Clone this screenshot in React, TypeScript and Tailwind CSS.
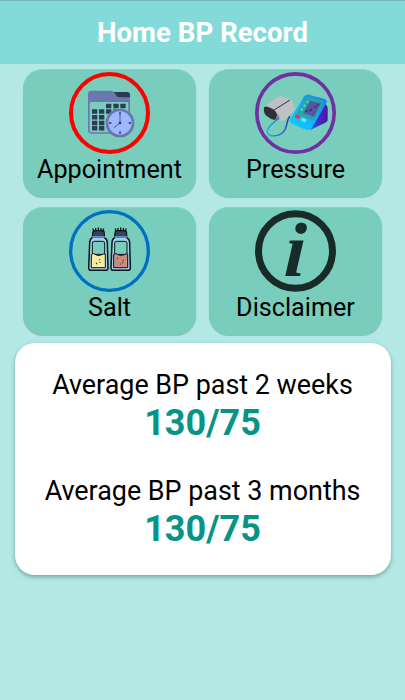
import type { ReactNode } from 'react';

type Tile = {
  label: string;
  icon: ReactNode;
};

type Reading = {
  period: string;
  value: string;
};

const ICON_BOX = '27 18 243 246';

// [x, y] of each day cell on the calendar page
const DAY_CELLS = [
  [138, 113], [160, 113], [181, 113],
  [96, 130], [117, 130], [138, 130], [160, 130],
  [96, 147], [117, 147],
  [96, 164], [117, 164],
  [96, 180], [117, 180],
];

const AppointmentIcon = () => (
  <svg viewBox={ICON_BOX} className="h-[82px] w-[81px]">
    <ellipse cx="148.5" cy="141" rx="115.5" ry="117" fill="none" stroke="#ff0000" strokeWidth="12" />
    {/* folder */}
    <path d="M152 78h50q8 0 8 9v18h-40z" fill="#30384f" />
    <path d="M84 84q0-10 10-10h60q5 0 9 6l4 6q4 8 12 8h31v100q0 9-9 9H94q-10 0-10-10z" fill="#6979ae" />
    <path d="M89 114q0-6 6-6h104q6 0 6 6v79q0 6-6 6H95q-6 0-6-6z" fill="#78cdbc" />
    {DAY_CELLS.map(([x, y]) => (
      <rect key={`${x}-${y}`} x={x} y={y} width="16" height="13.5" rx="1.5" fill="#303955" />
    ))}
    {/* clock */}
    <circle cx="180" cy="171" r="43" fill="#6678ad" />
    <circle cx="180" cy="171" r="35" fill="#9db8ff" />
    <path d="M180 138v8M180 196v8M147 171h7M206 171h7" stroke="#293252" strokeWidth="4" />
    <path d="M180 147v24l-18 14" fill="none" stroke="#43527d" strokeWidth="2.5" />
    <circle cx="180" cy="171" r="4" fill="#293252" />
  </svg>
);

const PressureIcon = () => (
  <svg viewBox={ICON_BOX} className="h-[82px] w-[81px]">
    <defs>
      <linearGradient id="monitor-face" x1="0" y1="1" x2="1" y2="0">
        <stop offset="0" stopColor="#08d5f4" />
        <stop offset="0.5" stopColor="#10b0ff" />
        <stop offset="1" stopColor="#1878f0" />
      </linearGradient>
      <linearGradient id="monitor-side" x1="0" y1="0" x2="1" y2="0">
        <stop offset="0" stopColor="#1688f5" />
        <stop offset="0.6" stopColor="#3c32c8" />
        <stop offset="1" stopColor="#5a0ca8" />
      </linearGradient>
      <linearGradient id="tube" x1="0" y1="0" x2="1" y2="0">
        <stop offset="0" stopColor="#14b9e8" />
        <stop offset="1" stopColor="#2b2fae" />
      </linearGradient>
    </defs>
    <ellipse cx="148.5" cy="141" rx="116" ry="117.5" fill="none" stroke="#7030a0" strokeWidth="11" />
    {/* cuff */}
    <path d="M56 120l38-26q8-5 17-2l24 8q6 10 12 30l-30 32q-8 5-15 2l-44-17q-7-14-2-27z" fill="#bfc0c5" />
    <path d="M132 102l-48 30" stroke="#33343a" strokeWidth="3" />
    <path d="M54 124q7-6 20 2 16 7 19 19 1 15-6 17-12-1-24-11-12-9-9-27z" fill="#303136" />
    <path d="M94 144q7 4 5 17l-11 2z" fill="#888a91" />
    <path d="M99 156C84 170 60 185 64 200C72 216 107 212 118 189C125 174 122 160 132 151" fill="none" stroke="url(#tube)" strokeWidth="4" />
    {/* monitor */}
    <path d="M230 103l13 17q2 2 2 8v35q-1 4-7 7l-44 21-18-8z" fill="url(#monitor-side)" />
    <path d="M175 90q5-6 14-4l47 13q9 3 5 12l-43 74q-5 9-16 7-22-7-47-21-7-5-2-13z" fill="url(#monitor-face)" />
    <path d="M180 95q3-4 8-3l42 12q5 2 2 7l-27 49q-3 4-8 2l-42-16q-4-2-1-7z" fill="#28a5a4" />
    <path d="M191 105l34 7-21 40-31-10z" fill="#5756a5" />
    <path d="M177 134q6 5 8-1M192 130q-3 5 2 5 6-3 2-7M204 121q2 6 7 1M212 117q5 3 7-2" fill="none" stroke="#242960" strokeWidth="3" />
    <path d="M182 107l5 2M173 118l5 2M164 130l6 2" stroke="#6fe3c7" strokeWidth="5" />
    <rect x="147" y="147" width="15" height="10" rx="3" fill="#ef3150" transform="rotate(24 154 152)" />
    <rect x="166" y="157" width="15" height="10" rx="3" fill="#91d5f2" transform="rotate(24 173 162)" />
  </svg>
);

type ShakerProps = {
  x: number;
  fill: string;
  grains: number[][];
};

const Shaker = ({ x, fill, grains }: ShakerProps) => (
  <g transform={`translate(${x} 0)`} stroke="#10151d" strokeLinejoin="round" strokeLinecap="round">
    <path d="M12 101L14 90H46L48 101Q57 106 57 116L59 192Q59 199 52 199H8Q1 199 1 192L4 116Q4 106 12 101Z" fill="#a0d0ec" strokeWidth="4.5" />
    <path d="M13 88q0-8 6-8h23q6 0 6 8v12H13z" fill="#34455b" strokeWidth="3.5" />
    <path d="M14 75l3 6M22 73v7M30 72v8M38 73v7M46 75l-3 6" fill="none" strokeWidth="4" />
    <path d="M13 99h35" stroke="#70a9e5" strokeWidth="4" />
    <path d="M12 150V117q0-5 6-5h25q6 0 6 5v33z" fill="#78cdbc" strokeWidth="3" />
    <path d="M10 151q6-5 10 0 9 7 21 1 5-4 10-1v40H10z" fill={fill} strokeWidth="3" />
    {grains.map(([cx, cy]) => (
      <circle key={`${cx}-${cy}`} cx={cx} cy={cy} r="1.7" fill="#10151d" stroke="none" />
    ))}
  </g>
);

const SaltIcon = () => (
  <svg viewBox={ICON_BOX} className="h-[82px] w-[81px]">
    <ellipse cx="148.5" cy="141" rx="116.5" ry="118" fill="none" stroke="#0070c0" strokeWidth="10" />
    <Shaker x={85} fill="#f8ed9c" grains={[[33, 167], [25, 177], [35, 175], [24, 179]]} />
    <Shaker x={152} fill="#cc8b80" grains={[[21, 163], [38, 169], [29, 180], [36, 176]]} />
  </svg>
);

const DisclaimerIcon = () => (
  <svg viewBox={ICON_BOX} className="h-[82px] w-[81px] overflow-visible">
    <ellipse cx="148.5" cy="141" rx="111" ry="112" fill="none" stroke="#192b28" strokeWidth="21" />
    <text
      fontSize="232"
      fill="#192b28"
      transform="translate(112 217) skewX(-3)"
      className="font-['Liberation_Serif',serif] font-bold italic"
    >
      i
    </text>
  </svg>
);

const TILES: Tile[] = [
  { label: 'Appointment', icon: <AppointmentIcon /> },
  { label: 'Pressure', icon: <PressureIcon /> },
  { label: 'Salt', icon: <SaltIcon /> },
  { label: 'Disclaimer', icon: <DisclaimerIcon /> },
];

const READINGS: Reading[] = [
  { period: 'Average BP past 2 weeks', value: '130/75' },
  { period: 'Average BP past 3 months', value: '130/75' },
];

export default function App() {
  return (
    <div className="min-h-[700px] w-full bg-[#b3e8e4] font-['Roboto',sans-serif] text-black">
      <header className="flex h-16 items-center justify-center border-t border-[#75b9b8] bg-[#82dbd9]">
        <h1 className="text-[27.6px] leading-8 font-bold text-white">Home BP Record</h1>
      </header>

      <main className="pt-[5px]">
        <div className="mx-[23px] grid grid-cols-2 gap-x-[13px] gap-y-[9.5px]">
          {TILES.map((tile) => (
            <button
              key={tile.label}
              className="flex h-32 flex-col items-center rounded-[20px] bg-[#78cdbc] pt-[3px] shadow-[0_1px_1px_#91b9b5,inset_0_1px_1px_#7cdcc7]"
            >
              {tile.icon}
              <span className="text-[25.2px] leading-[31px]">{tile.label}</span>
            </button>
          ))}
        </div>

        <section className="mx-[14.5px] mt-2 flex h-[232px] flex-col items-center gap-[30px] rounded-[20px] bg-white pt-[26px] shadow-[0_2px_4px_#75a6a2]">
          {READINGS.map((reading) => (
            <div key={reading.period} className="flex flex-col items-center">
              <p className="text-[26.9px] leading-8 whitespace-nowrap">{reading.period}</p>
              <p className="text-[36px] leading-[44px] font-bold text-[#079486]">{reading.value}</p>
            </div>
          ))}
        </section>
      </main>
    </div>
  );
}
